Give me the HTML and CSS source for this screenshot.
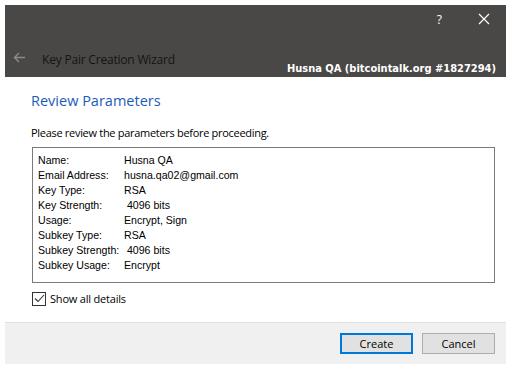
FILE: index.html
```html
<!DOCTYPE html>
<html lang="en">
<head>
  <meta charset="UTF-8">
  <title>Key Pair Creation Wizard</title>
  <link rel="stylesheet" href="styles.css">
</head>
<body>
  <div class="window">
    <header class="titlebar">
      <div class="controls">
        <span class="help">?</span>
        <svg class="close" width="12" height="12" viewBox="0 0 12 12"><path d="M1 1L11 11M11 1L1 11" stroke="#fff" stroke-width="1.2"/></svg>
      </div>
      <div class="caption">
        <svg class="back" width="13" height="11" viewBox="0 0 13 11"><path d="M12 5.5H1.5M6 1L1.5 5.5L6 10" stroke="#8c8b89" stroke-width="1.4" fill="none"/></svg>
        <span class="wizard">Key Pair Creation Wizard</span>
        <span class="mark">Husna QA (bitcointalk.org #1827294)</span>
      </div>
    </header>

    <main class="content">
      <h1>Review Parameters</h1>
      <p class="intro">Please review the parameters before proceeding.</p>

      <div class="params">
        <div class="row"><span class="key">Name:</span><span>Husna QA</span></div>
        <div class="row"><span class="key">Email Address:</span><span>husna.qa02@gmail.com</span></div>
        <div class="row"><span class="key">Key Type:</span><span>RSA</span></div>
        <div class="row"><span class="key">Key Strength:</span><span>&nbsp;4096 bits</span></div>
        <div class="row"><span class="key">Usage:</span><span>Encrypt, Sign</span></div>
        <div class="row"><span class="key">Subkey Type:</span><span>RSA</span></div>
        <div class="row"><span class="key">Subkey Strength:</span><span>&nbsp;4096 bits</span></div>
        <div class="row"><span class="key">Subkey Usage:</span><span>Encrypt</span></div>
      </div>

      <label class="check">
        <span class="box"><svg width="11" height="9" viewBox="0 0 11 9"><path d="M1 4.5L4 7.5L10 1" stroke="#333" stroke-width="1.1" fill="none"/></svg></span>
        Show all details
      </label>
    </main>

    <footer class="buttons">
      <button class="btn default">Create</button>
      <button class="btn">Cancel</button>
    </footer>
  </div>
</body>
</html>
```

FILE: styles.css
```css
body {
  margin: 0;
  background: #fff;
  font-family: 'Open Sans', 'Noto Sans', sans-serif;
  color: #000;
}

.window {
  margin: 5px;
  width: 501px;
  height: 359px;
  display: flex;
  flex-direction: column;
}

.titlebar {
  background: #4a4846;
  height: 72px;
  box-sizing: border-box;
  display: flex;
  flex-direction: column;
  justify-content: space-between;
  padding: 6px 0 1px 0;
}

.controls {
  display: flex;
  justify-content: flex-end;
  align-items: center;
  gap: 36px;
  padding-right: 16px;
  height: 16px;
}

.help {
  color: #fff;
  font-size: 12px;
  font-family: 'Open Sans', sans-serif;
}

.caption {
  display: flex;
  align-items: flex-end;
  padding-left: 8px;
  padding-right: 10px;
  height: 22px;
}

.back {
  margin-bottom: 13px;
}

.wizard {
  margin-left: 16px;
  margin-bottom: 8px;
  font-size: 12px;
  color: #141414;
  letter-spacing: -0.2px;
}

.mark {
  margin-left: auto;
  color: #fff;
  font-family: 'DejaVu Sans Condensed', 'DejaVu Sans', sans-serif;
  font-weight: bold;
  font-size: 11px;
  line-height: 14px;
}

.content {
  flex: 1;
  padding: 0 10px 0 26px;
}

h1 {
  margin: 14px 0 0 0;
  font-weight: normal;
  font-size: 14.5px;
  color: #1d5bb8;
  line-height: 20px;
}

.intro {
  margin: 14px 0 0 0;
  font-size: 11px;
  line-height: 15px;
  letter-spacing: -0.3px;
}

.params {
  margin-top: 7px;
  margin-left: 1px;
  width: 463px;
  height: 136px;
  box-sizing: border-box;
  border: 1px solid #7a7a7a;
  padding: 5px 0 0 5px;
  font-family: 'Liberation Sans', sans-serif;
  font-size: 10.6px;
}

.row {
  display: flex;
  height: 15px;
  line-height: 15px;
}

.key {
  width: 86px;
}

.check {
  display: flex;
  align-items: center;
  gap: 4px;
  margin-top: 8px;
  margin-left: 1px;
  font-size: 11px;
  letter-spacing: -0.2px;
}

.box {
  width: 12px;
  height: 12px;
  border: 1px solid #333;
  display: flex;
  align-items: center;
  justify-content: center;
}

.buttons {
  height: 42px;
  box-sizing: border-box;
  background: #f0f0f0;
  border-top: 1px solid #dfdfdf;
  display: flex;
  justify-content: flex-end;
  gap: 9px;
  padding: 10px 11px 0 0;
}

.btn {
  width: 73px;
  height: 21px;
  background: #e1e1e1;
  border: 1px solid #adadad;
  font-family: 'Open Sans', sans-serif;
  font-size: 11px;
  color: #000;
  padding: 0;
}

.btn.default {
  border: 2px solid #0078d7;
}
```
